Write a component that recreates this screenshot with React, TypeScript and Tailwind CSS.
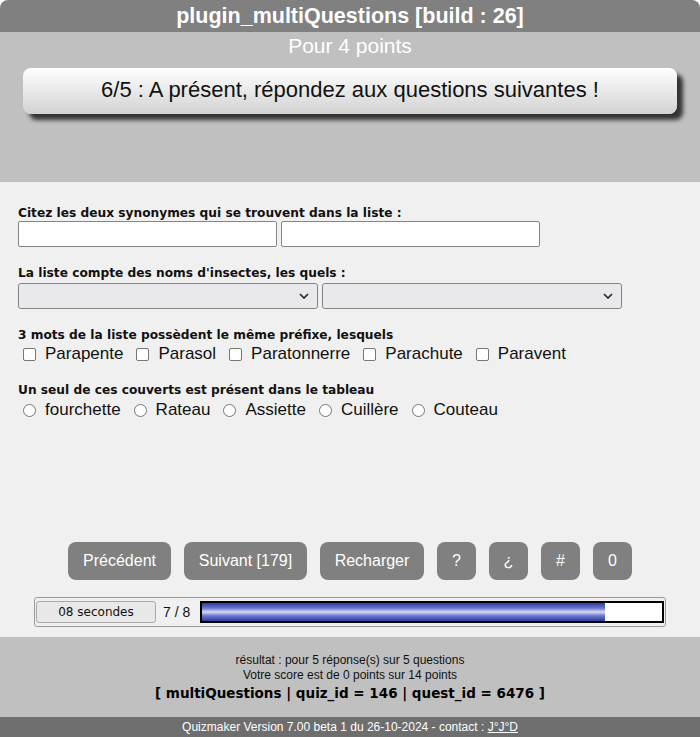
import { useState } from "react";

const narrow = "font-['Liberation_Sans_Narrow','Arial_Narrow','Liberation_Sans',sans-serif]";
const verdana = "font-['DejaVu_Sans','Verdana',sans-serif]";

function QuizButton({ label, w }: { label: string; w: string }) {
  return (
    <button
      className={`h-[38px] ${w} rounded-lg bg-[#808080] text-[16px] text-white font-['Liberation_Sans',Arial,sans-serif]`}
    >
      {label}
    </button>
  );
}

export default function App() {
  const [checked, setChecked] = useState<string[]>([]);
  const [radio, setRadio] = useState("");

  const prefixes = ["Parapente", "Parasol", "Paratonnerre", "Parachute", "Paravent"];
  const couverts = ["fourchette", "Rateau", "Assiette", "Cuillère", "Couteau"];

  const toggle = (v: string) =>
    setChecked((c) => (c.includes(v) ? c.filter((x) => x !== v) : [...c, v]));

  return (
    <div className="flex h-[737px] w-[700px] flex-col overflow-hidden rounded-t-lg font-['Liberation_Sans',Arial,sans-serif] text-[#111]">
      <header
        className={`flex h-[32px] shrink-0 items-center justify-center bg-[#808080] text-[21.5px] font-bold text-white ${narrow}`}
      >
        plugin_multiQuestions [build : 26]
      </header>

      <section className="flex h-[150px] shrink-0 flex-col items-center bg-[#c0c0c0]">
        <div className={`mt-[1px] h-[26px] text-[21px] leading-[26px] text-white ${narrow}`}>Pour 4 points</div>
        <div
          className={`mt-[9px] flex h-[46px] w-[654px] items-center justify-center rounded-lg bg-[linear-gradient(#ffffff,#d2d2d2)] pb-[3px] text-[22px] shadow-[6px_6px_4px_#333] ${narrow}`}
        >
          6/5 : A présent, répondez aux questions suivantes !
        </div>
      </section>

      <main className="flex h-[455px] shrink-0 flex-col bg-[#f0f0f0] px-[18px]">
        <div className={`mt-[23px] text-[12.2px] font-bold leading-[16px] ${verdana}`}>
          Citez les deux synonymes qui se trouvent dans la liste :
        </div>
        <div className="flex gap-[4px]">
          <input className="h-[26px] w-[259px] rounded-[2px] border border-[#858585] bg-white" />
          <input className="h-[26px] w-[259px] rounded-[2px] border border-[#858585] bg-white" />
        </div>

        <div className={`mt-[18px] text-[12.2px] font-bold leading-[16px] ${verdana}`}>
          La liste compte des noms d'insectes, les quels :
        </div>
        <div className="mt-[2px] flex gap-[4px]">
          {[0, 1].map((i) => (
            <div
              key={i}
              className="flex h-[26px] w-[300px] items-center justify-end rounded-[3px] border border-[#858585] bg-[#e9e9ed] pr-[8px]"
            >
              <svg width="10" height="6" viewBox="0 0 10 6">
                <path d="M1 1l4 4 4-4" fill="none" stroke="#222" strokeWidth="1.6" />
              </svg>
            </div>
          ))}
        </div>

        <div className={`mt-[18px] text-[12.2px] font-bold leading-[16px] ${verdana}`}>
          3 mots de la liste possèdent le même préfixe, lesquels
        </div>
        <div className="mt-[1px] flex h-[20px] items-center text-[17px]">
          {prefixes.map((p) => (
            <label key={p} className="flex items-center">
              <input
                type="checkbox"
                checked={checked.includes(p)}
                onChange={() => toggle(p)}
                className="ml-[5px] mr-[9px] h-[13px] w-[13px] appearance-none rounded-[2px] border border-[#767676] bg-white"
              />
              <span className="mr-[8px]">{p}</span>
            </label>
          ))}
        </div>

        <div className={`mt-[18px] text-[12.2px] font-bold leading-[16px] ${verdana}`}>
          Un seul de ces couverts est présent dans le tableau
        </div>
        <div className="mt-[2px] flex h-[20px] items-center text-[17px]">
          {couverts.map((c) => (
            <label key={c} className="flex items-center">
              <input
                type="radio"
                name="couvert"
                checked={radio === c}
                onChange={() => setRadio(c)}
                className="ml-[5px] mr-[9px] h-[13px] w-[13px] appearance-none rounded-full border border-[#767676] bg-white"
              />
              <span className="mr-[8px]">{c}</span>
            </label>
          ))}
        </div>

        <div className="mt-[122px] flex justify-center gap-[13px]">
          <QuizButton label="Précédent" w="w-[103px]" />
          <QuizButton label="Suivant [179]" w="w-[123px]" />
          <QuizButton label="Recharger" w="w-[104px]" />
          <QuizButton label="?" w="w-[39px]" />
          <QuizButton label="¿" w="w-[39px]" />
          <QuizButton label="#" w="w-[39px]" />
          <QuizButton label="0" w="w-[39px]" />
        </div>

        <div className="mx-[16px] mt-[17px] flex h-[30px] items-center rounded-[3px] border border-[#9a9a9a] px-[1px]">
          <div
            className={`flex h-[22px] w-[120px] items-center justify-center rounded-[3px] border border-[#a8a8a8] bg-[#e8e8e8] text-[12px] ${verdana}`}
          >
            08 secondes
          </div>
          <span className="ml-[7px] text-[14px]">7 / 8</span>
          <div className="ml-[10px] h-[22px] flex-1 border-2 border-black bg-white">
            <div className="h-full w-[87.5%] bg-[linear-gradient(#2d3aa0,#6f7cd0_30%,#d6dcf5_50%,#6f7cd0_70%,#2d3aa0)]" />
          </div>
        </div>
      </main>

      <section className="flex h-[80px] shrink-0 flex-col items-center bg-[#c0c0c0] pt-[16px] text-[12px] leading-[15px]">
        <div>résultat : pour 5 réponse(s) sur 5 questions</div>
        <div>Votre score est de 0 points sur 14 points</div>
        <div className={`mt-[1px] text-[13.5px] font-bold leading-[18px] text-black ${verdana}`}>
          [ multiQuestions | quiz_id = 146 | quest_id = 6476 ]
        </div>
      </section>

      <footer className="flex h-[20px] shrink-0 items-center justify-center bg-[#6e6e6e] text-[12px] text-white">
        Quizmaker Version 7.00 beta 1 du 26-10-2024 - contact :&nbsp;
        <a className="underline">J°J°D</a>
      </footer>
    </div>
  );
}
